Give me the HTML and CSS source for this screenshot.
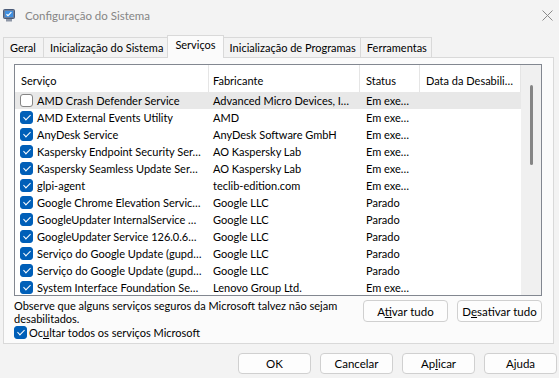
FILE: index.html
```html
<!DOCTYPE html>
<html lang="pt-BR">
<head>
    <meta charset="UTF-8">
    <title>Configuração do Sistema</title>
    <link rel="stylesheet" href="styles.css">
</head>
<body>
    <div class="titlebar">
        <svg class="app-icon" width="12" height="13" viewBox="0 0 12 13">
            <rect x="0.5" y="0.5" width="11" height="9" rx="1" fill="#6d7f9c" stroke="#4a5a78"/>
            <rect x="2" y="2" width="8" height="6" fill="#3f8fe0"/>
            <path d="M3.5 5.2 L5 6.6 L8.4 3.2" stroke="#ffffff" stroke-width="1.2" fill="none"/>
            <rect x="3" y="10" width="6" height="2.5" fill="#8d96a6"/>
        </svg>
        <span class="title">Configuração do Sistema</span>
        <svg class="close" width="11" height="11" viewBox="0 0 11 11">
            <path d="M0.5 0.5 L10.5 10.5 M10.5 0.5 L0.5 10.5" stroke="#8a8a8a" stroke-width="1"/>
        </svg>
    </div>

    <div class="tabs">
        <div class="tab">Geral</div>
        <div class="tab">Inicialização do Sistema</div>
        <div class="tab active">Serviços</div>
        <div class="tab">Inicialização de Programas</div>
        <div class="tab">Ferramentas</div>
    </div>

    <div class="panel">
        <div class="listview">
            <div class="list-main">
                <div class="list-header">
                    <div class="hcell">Serviço</div>
                    <div class="hcell">Fabricante</div>
                    <div class="hcell">Status</div>
                    <div class="hcell">Data da Desabili…</div>
                </div>

                <div class="row hover">
                    <div class="cell name"><span class="check"></span>AMD Crash Defender Service</div>
                    <div class="cell">Advanced Micro Devices, I…</div>
                    <div class="cell status">Em exe…</div>
                    <div class="cell"></div>
                </div>
                <div class="row">
                    <div class="cell name"><span class="check on"></span>AMD External Events Utility</div>
                    <div class="cell">AMD</div>
                    <div class="cell status">Em exe…</div>
                    <div class="cell"></div>
                </div>
                <div class="row">
                    <div class="cell name"><span class="check on"></span>AnyDesk Service</div>
                    <div class="cell">AnyDesk Software GmbH</div>
                    <div class="cell status">Em exe…</div>
                    <div class="cell"></div>
                </div>
                <div class="row">
                    <div class="cell name"><span class="check on"></span>Kaspersky Endpoint Security Ser…</div>
                    <div class="cell">AO Kaspersky Lab</div>
                    <div class="cell status">Em exe…</div>
                    <div class="cell"></div>
                </div>
                <div class="row">
                    <div class="cell name"><span class="check on"></span>Kaspersky Seamless Update Ser…</div>
                    <div class="cell">AO Kaspersky Lab</div>
                    <div class="cell status">Em exe…</div>
                    <div class="cell"></div>
                </div>
                <div class="row">
                    <div class="cell name"><span class="check on"></span>glpi-agent</div>
                    <div class="cell">teclib-edition.com</div>
                    <div class="cell status">Em exe…</div>
                    <div class="cell"></div>
                </div>
                <div class="row">
                    <div class="cell name"><span class="check on"></span>Google Chrome Elevation Servic…</div>
                    <div class="cell">Google LLC</div>
                    <div class="cell status">Parado</div>
                    <div class="cell"></div>
                </div>
                <div class="row">
                    <div class="cell name"><span class="check on"></span>GoogleUpdater InternalService …</div>
                    <div class="cell">Google LLC</div>
                    <div class="cell status">Parado</div>
                    <div class="cell"></div>
                </div>
                <div class="row">
                    <div class="cell name"><span class="check on"></span>GoogleUpdater Service 126.0.6…</div>
                    <div class="cell">Google LLC</div>
                    <div class="cell status">Parado</div>
                    <div class="cell"></div>
                </div>
                <div class="row">
                    <div class="cell name"><span class="check on"></span>Serviço do Google Update (gupd…</div>
                    <div class="cell">Google LLC</div>
                    <div class="cell status">Parado</div>
                    <div class="cell"></div>
                </div>
                <div class="row">
                    <div class="cell name"><span class="check on"></span>Serviço do Google Update (gupd…</div>
                    <div class="cell">Google LLC</div>
                    <div class="cell status">Parado</div>
                    <div class="cell"></div>
                </div>
                <div class="row">
                    <div class="cell name"><span class="check on"></span>System Interface Foundation Se…</div>
                    <div class="cell">Lenovo Group Ltd.</div>
                    <div class="cell status">Em exe…</div>
                    <div class="cell"></div>
                </div>
            </div>
            <div class="scrollbar"><div class="thumb"></div></div>
        </div>

        <div class="below">
            <p class="note">Observe que alguns serviços seguros da Microsoft talvez não sejam<br>desabilitados.</p>
            <div class="actions">
                <button class="btn">A<u>t</u>ivar tudo</button>
                <button class="btn">D<u>e</u>sativar tudo</button>
            </div>
        </div>

        <label class="hide-ms"><span class="check on"></span>Oc<u>u</u>ltar todos os serviços Microsoft</label>
    </div>

    <div class="footer">
        <button class="btn">OK</button>
        <button class="btn">Cancelar</button>
        <button class="btn">Ap<u>l</u>icar</button>
        <button class="btn">Ajuda</button>
    </div>
</body>
</html>
```

FILE: styles.css
```css
*{
    margin: 0;
    padding: 0;
    box-sizing: border-box;
}

body{
    width: 559px;
    height: 378px;
    overflow: hidden;
    background-color: #f3f3f3;
    font-family: Lato, "Noto Sans", sans-serif;
    font-size: 11px;
    color: #000;
}

/* title bar */
.titlebar{
    height: 30px;
    display: flex;
    align-items: center;
    padding-left: 3px;
}

.app-icon{
    margin-right: 10px;
}

.title{
    color: #858585;
    font-size: 11.5px;
}

.close{
    margin-left: auto;
    margin-right: 6px;
}

/* tabs */
.tabs{
    display: flex;
    align-items: flex-end;
    height: 22px;
    margin-top: 5px;
    padding-left: 3px;
}

.tab{
    height: 20px;
    padding: 3px 4px 0 6px;
    border: 1px solid #d9d9d9;
    border-bottom: none;
    margin-left: -1px;
    white-space: nowrap;
}

.tab:first-child{
    margin-left: 0;
    min-width: 41px;
}

.tab.active{
    position: relative;
    height: 23px;
    margin-bottom: -1px;
    padding: 2px 7px 0 7px;
    background-color: #fbfbfb;
}

/* panel */
.panel{
    width: 551px;
    height: 287px;
    margin-left: 3px;
    border: 1px solid #d9d9d9;
    background-color: #fbfbfb;
    padding: 6px 11px 0 10px;
}

.listview{
    display: flex;
    height: 232px;
    border: 1px solid #828790;
    background-color: #fff;
    overflow: hidden;
}

.list-main{
    width: 506px;
}

.list-header,
.row{
    display: grid;
    grid-template-columns: 194px 151px 60px 101px;
}

.list-header{
    height: 27px;
}

.hcell{
    display: flex;
    align-items: center;
    padding: 3px 0 0 6px;
    border-right: 1px solid #e5e5e5;
    white-space: nowrap;
}

.list-header .hcell:nth-child(2){
    padding-left: 4px;
}

.row{
    height: 17px;
}

.row.hover{
    background-color: #e8e8e8;
}

.cell{
    display: flex;
    align-items: center;
    padding-left: 4px;
    white-space: nowrap;
    overflow: hidden;
}

.cell.name{
    padding-left: 5px;
}

.cell.status{
    padding-left: 6px;
}

.check{
    display: inline-flex;
    justify-content: center;
    align-items: center;
    width: 13px;
    height: 13px;
    margin-right: 4px;
    border: 1px solid #858585;
    border-radius: 3px;
    background-color: #fff;
    flex-shrink: 0;
}

.check.on{
    border-color: #005fb8;
    background-color: #005fb8;
}

.check.on::after{
    content: "";
    width: 3px;
    height: 6px;
    margin-top: -2px;
    border: solid #fff;
    border-width: 0 1.3px 1.3px 0;
    transform: rotate(45deg);
}

.scrollbar{
    width: 20px;
    background-color: #f0f0f0;
    padding-top: 20px;
}

.thumb{
    width: 3px;
    height: 80px;
    margin: 0 auto;
    background-color: #858585;
    border-radius: 2px;
}

/* under the list */
.below{
    display: flex;
    justify-content: space-between;
    margin-top: 3px;
}

.note{
    line-height: 13px;
    white-space: nowrap;
}

.actions{
    display: flex;
    gap: 9px;
    padding-top: 1px;
}

.btn{
    height: 22px;
    border: 1px solid #d0d0d0;
    border-radius: 4px;
    background-color: #fdfdfd;
    font-family: inherit;
    font-size: 11.5px;
    color: #000;
}

.actions .btn{
    width: 85px;
}

.hide-ms{
    display: flex;
    align-items: center;
    margin-top: 1px;
}

.hide-ms .check{
    margin-right: 2px;
}

/* bottom buttons */
.footer{
    display: flex;
    justify-content: flex-end;
    gap: 9px;
    margin-top: 9px;
    padding-right: 2px;
}

.footer .btn{
    width: 73px;
    height: 21px;
}
```
